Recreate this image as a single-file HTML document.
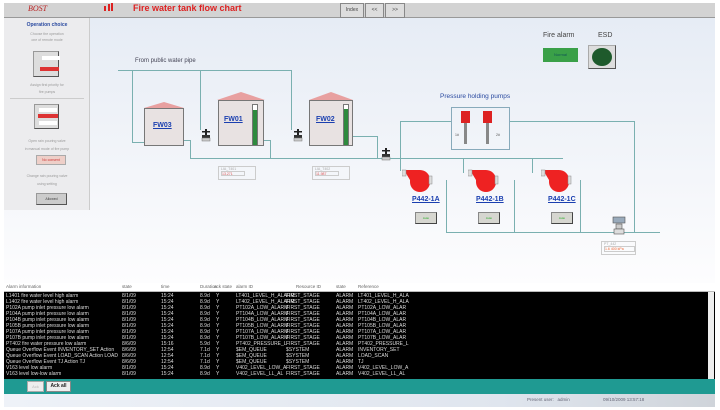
<!DOCTYPE html>
<html><head><meta charset="utf-8"><style>
*{margin:0;padding:0;box-sizing:border-box}
body{width:720px;height:410px;background:#fff;font-family:"Liberation Sans",sans-serif;position:relative;overflow:hidden}
.a{position:absolute}
.main{left:4px;top:18px;width:711px;height:265px;background:linear-gradient(#e6ecf5,#f4f6fa 60%,#fdfdfe)}
.t{font-size:3.5px;color:#999}
.row{position:absolute;left:6px;width:700px;height:6px;font-size:5px;line-height:6px;color:#ddd;white-space:nowrap}
.row span{position:absolute}
.tank{position:absolute;background:#e8e2e2;border:1px solid #777}
.roof{position:absolute;width:0;height:0;border-left:solid transparent;border-right:solid transparent;border-bottom:solid #e8a0a0}
.lbl{position:absolute;color:#1a3fb0;font-weight:bold;font-size:7px;text-decoration:underline}
.pipe{position:absolute;background:#7ab0b0}
.btn{position:absolute;background:#d6d6d0;border:1px solid #888;border-right-color:#444;border-bottom-color:#444;font-size:3px;color:#2a2;text-align:center;line-height:10px}
</style></head><body>
<div class="a" style="left:4px;top:3px;width:711px;height:15px;background:#d3d3d3;border-bottom:1px solid #999"></div>
<div class="a" style="left:28px;top:4px;font-family:'Liberation Serif',serif;font-style:italic;font-size:8px;color:#b22">BOST</div>
<div class="a" style="left:104px;top:6px;width:2px;height:5px;background:#d22"></div>
<div class="a" style="left:108px;top:4px;width:2px;height:7px;background:#d22"></div>
<div class="a" style="left:111px;top:3px;width:2px;height:8px;background:#d22"></div>
<div class="a" style="left:133px;top:3px;font-size:9px;font-weight:bold;color:#d22">Fire water tank flow chart</div>
<div class="a" style="left:340px;top:3px;width:24px;height:15px;border:1px solid #888;background:#ddd;font-size:5px;line-height:13px;text-align:center;color:#444">Index</div>
<div class="a" style="left:365px;top:3px;width:19px;height:15px;border:1px solid #888;background:#ddd;font-size:5px;line-height:13px;text-align:center;color:#444">&lt;&lt;</div>
<div class="a" style="left:385px;top:3px;width:20px;height:15px;border:1px solid #888;background:#ddd;font-size:5px;line-height:13px;text-align:center;color:#444">&gt;&gt;</div>
<div class="a main"></div>
<div class="a" style="left:4px;top:18px;width:86px;height:192px;background:#ececee;border-right:1px solid #ccc"></div>
<div class="a" style="left:4px;top:22px;width:86px;text-align:center;font-size:5px;font-weight:bold;color:#2a4aa0">Operation choice</div>
<div class="a t" style="left:4px;top:31px;width:86px;text-align:center;line-height:6px">Choose the operation<br>one of remote mode</div>
<div class="a" style="left:33px;top:51px;width:26px;height:26px;background:#ddd;border:1px solid #999;border-right-color:#555;border-bottom-color:#555"></div>
<div class="a" style="left:42px;top:56px;width:18px;height:4px;background:#fff"></div>
<div class="a" style="left:40px;top:67px;width:19px;height:4px;background:#d33"></div>
<div class="a t" style="left:4px;top:82px;width:86px;text-align:center;line-height:7px">Assign first priority for<br>fire pumps</div>
<div class="a" style="left:10px;top:98px;width:74px;height:1px;background:#ccc"></div>
<div class="a" style="left:34px;top:104px;width:25px;height:25px;background:#ddd;border:1px solid #999;border-right-color:#555;border-bottom-color:#555"></div>
<div class="a" style="left:39px;top:108px;width:18px;height:4px;background:#fff"></div>
<div class="a" style="left:38px;top:114px;width:20px;height:4px;background:#d33"></div>
<div class="a" style="left:39px;top:121px;width:18px;height:4px;background:#fff"></div>
<div class="a t" style="left:0px;top:137px;width:94px;text-align:center;line-height:8px">Open rain pouring valve<br>in manual mode of fire pump</div>
<div class="a" style="left:36px;top:155px;width:30px;height:10px;background:#eecfc8;border:1px solid #aaa;font-size:3.5px;color:#c33;text-align:center;line-height:8px">No consent</div>
<div class="a t" style="left:4px;top:172px;width:86px;text-align:center;line-height:8px">Change rain pouring valve<br>using setting</div>
<div class="a" style="left:36px;top:193px;width:31px;height:12px;background:#ccc;border:1px solid #999;border-right-color:#555;border-bottom-color:#555;font-size:3.5px;color:#444;text-align:center;line-height:10px">Allowed</div>

<div class="a" style="left:135px;top:58px;font-size:6px;color:#445">From public water pipe</div>
<div class="pipe" style="left:118px;top:70px;width:174px;height:1px"></div>
<div class="pipe" style="left:132px;top:70px;width:1px;height:72px"></div>
<div class="pipe" style="left:200px;top:70px;width:1px;height:60px"></div>
<div class="pipe" style="left:291px;top:70px;width:1px;height:60px"></div>
<div class="pipe" style="left:132px;top:142px;width:12px;height:1px"></div>
<div class="pipe" style="left:183px;top:140px;width:8px;height:1px"></div>
<div class="pipe" style="left:190px;top:140px;width:1px;height:18px"></div>
<div class="pipe" style="left:190px;top:158px;width:200px;height:1px"></div>
<div class="pipe" style="left:263px;top:140px;width:8px;height:1px"></div>
<div class="pipe" style="left:270px;top:140px;width:1px;height:18px"></div>
<div class="pipe" style="left:353px;top:136px;width:25px;height:1px"></div>
<div class="pipe" style="left:377px;top:136px;width:1px;height:22px"></div>

<div class="roof" style="left:144px;top:102px;border-left-width:20px;border-right-width:20px;border-bottom-width:6px"></div>
<div class="tank" style="left:144px;top:108px;width:40px;height:38px"></div>
<div class="lbl" style="left:153px;top:122px">FW03</div>
<div class="roof" style="left:217px;top:92px;border-left-width:24px;border-right-width:24px;border-bottom-width:8px"></div>
<div class="tank" style="left:218px;top:100px;width:46px;height:46px"></div>
<div class="a" style="left:252px;top:104px;width:6px;height:42px;background:#2e8a3e;border:1px solid #777"></div>
<div class="a" style="left:253px;top:105px;width:4px;height:5px;background:#fff"></div>
<div class="lbl" style="left:224px;top:116px">FW01</div>
<div class="roof" style="left:309px;top:92px;border-left-width:22px;border-right-width:22px;border-bottom-width:8px"></div>
<div class="tank" style="left:309px;top:100px;width:44px;height:46px"></div>
<div class="a" style="left:343px;top:104px;width:6px;height:42px;background:#2e8a3e;border:1px solid #777"></div>
<div class="a" style="left:344px;top:105px;width:4px;height:4px;background:#fff"></div>
<div class="lbl" style="left:316px;top:116px">FW02</div>

<svg class="a" style="left:200px;top:127px" width="12" height="16"><rect x="2" y="4" width="8" height="1.5" fill="#222"/><rect x="5" y="2" width="2" height="8" fill="#222"/><path d="M2 8h8v3H2z" fill="#333"/><rect x="2" y="11" width="8" height="3" fill="#ccc" stroke="#777" stroke-width=".5"/></svg>
<svg class="a" style="left:292px;top:127px" width="12" height="16"><rect x="2" y="4" width="8" height="1.5" fill="#222"/><rect x="5" y="2" width="2" height="8" fill="#222"/><path d="M2 8h8v3H2z" fill="#333"/><rect x="2" y="11" width="8" height="3" fill="#ccc" stroke="#777" stroke-width=".5"/></svg>
<svg class="a" style="left:380px;top:146px" width="12" height="16"><rect x="2" y="4" width="8" height="1.5" fill="#222"/><rect x="5" y="2" width="2" height="8" fill="#222"/><path d="M2 8h8v3H2z" fill="#333"/><rect x="2" y="11" width="8" height="3" fill="#ccc" stroke="#777" stroke-width=".5"/></svg>

<div class="a" style="left:218px;top:166px;width:38px;height:14px;border:1px solid #ccc;font-size:3.5px;color:#aaa;padding-left:2px">LIA_T401<div style="width:24px;height:5px;border:1px solid #ccc;color:#d55">13.271</div></div>
<div class="a" style="left:312px;top:166px;width:38px;height:14px;border:1px solid #ccc;font-size:3.5px;color:#aaa;padding-left:2px">LIA_T402<div style="width:24px;height:5px;border:1px solid #ccc;color:#d55">11.987</div></div>

<div class="a" style="left:543px;top:32px;font-size:7px;color:#444">Fire alarm</div>
<div class="a" style="left:598px;top:32px;font-size:7px;color:#444">ESD</div>
<div class="a" style="left:543px;top:48px;width:35px;height:14px;background:#3aa048;font-size:4px;color:#155;text-align:center;line-height:14px">Normal</div>
<div class="a" style="left:588px;top:45px;width:28px;height:24px;background:#ddd;border:1px solid #aaa;border-right-color:#555;border-bottom-color:#555"></div>
<div class="a" style="left:592px;top:48px;width:20px;height:18px;border-radius:50%;background:#1e5a2c"></div>

<div class="a" style="left:440px;top:93px;font-size:6.5px;color:#2a4aa0">Pressure holding pumps</div>
<div class="a" style="left:451px;top:107px;width:59px;height:43px;border:1px solid #8ab"></div>
<div class="a" style="left:461px;top:111px;width:9px;height:12px;background:#d22"></div>
<div class="a" style="left:464px;top:123px;width:3px;height:21px;background:#888"></div>
<div class="a" style="left:483px;top:111px;width:9px;height:12px;background:#d22"></div>
<div class="a" style="left:486px;top:123px;width:3px;height:21px;background:#888"></div>
<div class="a" style="left:455px;top:133px;font-size:3.5px;color:#555">1#</div>
<div class="a" style="left:496px;top:133px;font-size:3.5px;color:#555">2#</div>

<div class="pipe" style="left:400px;top:121px;width:51px;height:1px"></div>
<div class="pipe" style="left:510px;top:121px;width:125px;height:1px"></div>
<div class="pipe" style="left:400px;top:121px;width:1px;height:50px"></div>
<div class="pipe" style="left:634px;top:121px;width:1px;height:111px"></div>
<div class="pipe" style="left:390px;top:158px;width:173px;height:1px"></div>
<div class="pipe" style="left:463px;top:158px;width:1px;height:15px"></div>
<div class="pipe" style="left:532px;top:158px;width:1px;height:15px"></div>
<div class="pipe" style="left:446px;top:180px;width:1px;height:52px"></div>
<div class="pipe" style="left:514px;top:180px;width:1px;height:52px"></div>
<div class="pipe" style="left:580px;top:180px;width:1px;height:52px"></div>
<div class="pipe" style="left:446px;top:232px;width:214px;height:1px"></div>

<svg class="a" style="left:402px;top:168px" width="44" height="26"><path d="M2 2h16a10 10 0 1 1-10 10z" fill="#e22"/><circle cx="18" cy="14" r="10" fill="#e22"/><rect x="0" y="2" width="4" height="6" fill="#ddd" stroke="#888" stroke-width=".5"/><rect x="27" y="8" width="3" height="8" fill="#ddd" stroke="#888" stroke-width=".5"/></svg>
<svg class="a" style="left:468px;top:168px" width="44" height="26"><path d="M2 2h16a10 10 0 1 1-10 10z" fill="#e22"/><circle cx="18" cy="14" r="10" fill="#e22"/><rect x="0" y="2" width="4" height="6" fill="#ddd" stroke="#888" stroke-width=".5"/><rect x="27" y="8" width="3" height="8" fill="#ddd" stroke="#888" stroke-width=".5"/></svg>
<svg class="a" style="left:541px;top:168px" width="44" height="26"><path d="M2 2h16a10 10 0 1 1-10 10z" fill="#e22"/><circle cx="18" cy="14" r="10" fill="#e22"/><rect x="0" y="2" width="4" height="6" fill="#ddd" stroke="#888" stroke-width=".5"/><rect x="27" y="8" width="3" height="8" fill="#ddd" stroke="#888" stroke-width=".5"/></svg>
<div class="lbl" style="left:412px;top:196px">P442-1A</div>
<div class="lbl" style="left:476px;top:196px">P442-1B</div>
<div class="lbl" style="left:548px;top:196px">P442-1C</div>
<div class="btn" style="left:415px;top:212px;width:22px;height:12px">Auto</div>
<div class="btn" style="left:478px;top:212px;width:22px;height:12px">Auto</div>
<div class="btn" style="left:551px;top:212px;width:22px;height:12px">Auto</div>

<svg class="a" style="left:611px;top:216px" width="16" height="20"><rect x="2" y="1" width="12" height="6" fill="#9ab" stroke="#555" stroke-width=".6"/><rect x="5" y="8" width="6" height="5" fill="#ccc" stroke="#555" stroke-width=".6"/><rect x="3" y="13" width="10" height="5" fill="#ddd" stroke="#555" stroke-width=".6"/></svg>
<div class="a" style="left:601px;top:241px;width:35px;height:14px;border:1px solid #ccc;font-size:3.5px;color:#aaa;padding-left:2px">PT_442<div style="color:#e63;border:1px solid #ccc">1.6 400 kPa</div></div>

<div class="a" style="left:4px;top:283px;width:711px;height:96px;background:#000"></div>
<div class="a" style="left:4px;top:283px;width:711px;height:9px;background:#fff;border-bottom:1px solid #bbb"></div>
<div class="row" style="top:284px;color:#666;font-size:4.5px">
<span style="left:0">Alarm information</span><span style="left:116px">state</span><span style="left:155px">time</span><span style="left:194px">Duration</span><span style="left:208px">ack state</span><span style="left:230px">alarm ID</span><span style="left:290px">Resource ID</span><span style="left:330px">state</span><span style="left:352px">Reference</span></div>
<div class="a" style="left:708px;top:292px;width:6px;height:87px;background:#eee"></div>
<div id="rows"></div>
<div class="row" style="top:293px"><span style="left:0">L1401 fire water level high alarm</span><span style="left:116px">8/1/09</span><span style="left:155px">15:24</span><span style="left:194px">8.9d</span><span style="left:210px">Y</span><span style="left:230px">LT401_LEVEL_H_ALARM</span><span style="left:280px">FIRST_STAGE</span><span style="left:330px">ALARM</span><span style="left:352px">LT401_LEVEL_H_ALA</span></div>
<div class="row" style="top:299px"><span style="left:0">L1402 fire water level high alarm</span><span style="left:116px">8/1/09</span><span style="left:155px">15:24</span><span style="left:194px">8.9d</span><span style="left:210px">Y</span><span style="left:230px">LT402_LEVEL_H_ALARM</span><span style="left:280px">FIRST_STAGE</span><span style="left:330px">ALARM</span><span style="left:352px">LT402_LEVEL_H_ALA</span></div>
<div class="row" style="top:305px"><span style="left:0">P102A pump inlet pressure low alarm</span><span style="left:116px">8/1/09</span><span style="left:155px">15:24</span><span style="left:194px">8.9d</span><span style="left:210px">Y</span><span style="left:230px">PT102A_LOW_ALARM</span><span style="left:280px">FIRST_STAGE</span><span style="left:330px">ALARM</span><span style="left:352px">PT102A_LOW_ALAR</span></div>
<div class="row" style="top:311px"><span style="left:0">P104A pump inlet pressure low alarm</span><span style="left:116px">8/1/09</span><span style="left:155px">15:24</span><span style="left:194px">8.9d</span><span style="left:210px">Y</span><span style="left:230px">PT104A_LOW_ALARM</span><span style="left:280px">FIRST_STAGE</span><span style="left:330px">ALARM</span><span style="left:352px">PT104A_LOW_ALAR</span></div>
<div class="row" style="top:317px"><span style="left:0">P104B pump inlet pressure low alarm</span><span style="left:116px">8/1/09</span><span style="left:155px">15:24</span><span style="left:194px">8.9d</span><span style="left:210px">Y</span><span style="left:230px">PT104B_LOW_ALARM</span><span style="left:280px">FIRST_STAGE</span><span style="left:330px">ALARM</span><span style="left:352px">PT104B_LOW_ALAR</span></div>
<div class="row" style="top:323px"><span style="left:0">P105B pump inlet pressure low alarm</span><span style="left:116px">8/1/09</span><span style="left:155px">15:24</span><span style="left:194px">8.9d</span><span style="left:210px">Y</span><span style="left:230px">PT105B_LOW_ALARM</span><span style="left:280px">FIRST_STAGE</span><span style="left:330px">ALARM</span><span style="left:352px">PT105B_LOW_ALAR</span></div>
<div class="row" style="top:329px"><span style="left:0">P107A pump inlet pressure low alarm</span><span style="left:116px">8/1/09</span><span style="left:155px">15:24</span><span style="left:194px">8.9d</span><span style="left:210px">Y</span><span style="left:230px">PT107A_LOW_ALARM</span><span style="left:280px">FIRST_STAGE</span><span style="left:330px">ALARM</span><span style="left:352px">PT107A_LOW_ALAR</span></div>
<div class="row" style="top:335px"><span style="left:0">P107B pump inlet pressure low alarm</span><span style="left:116px">8/1/09</span><span style="left:155px">15:24</span><span style="left:194px">8.9d</span><span style="left:210px">Y</span><span style="left:230px">PT107B_LOW_ALARM</span><span style="left:280px">FIRST_STAGE</span><span style="left:330px">ALARM</span><span style="left:352px">PT107B_LOW_ALAR</span></div>
<div class="row" style="top:341px"><span style="left:0">PT402 fire water pressure low alarm</span><span style="left:116px">8/6/09</span><span style="left:155px">15:16</span><span style="left:194px">5.9d</span><span style="left:210px">Y</span><span style="left:230px">PT402_PRESSURE_L</span><span style="left:280px">FIRST_STAGE</span><span style="left:330px">ALARM</span><span style="left:352px">PT402_PRESSURE_L</span></div>
<div class="row" style="top:347px"><span style="left:0">Queue Overflow Event INVENTORY_SET Action</span><span style="left:116px">8/6/09</span><span style="left:155px">12:54</span><span style="left:194px">7.1d</span><span style="left:210px">Y</span><span style="left:230px">$EM_QUEUE</span><span style="left:280px">$SYSTEM</span><span style="left:330px">ALARM</span><span style="left:352px">INVENTORY_SET</span></div>
<div class="row" style="top:353px"><span style="left:0">Queue Overflow Event LOAD_SCAN Action LOAD</span><span style="left:116px">8/6/09</span><span style="left:155px">12:54</span><span style="left:194px">7.1d</span><span style="left:210px">Y</span><span style="left:230px">$EM_QUEUE</span><span style="left:280px">$SYSTEM</span><span style="left:330px">ALARM</span><span style="left:352px">LOAD_SCAN</span></div>
<div class="row" style="top:359px"><span style="left:0">Queue Overflow Event TJ Action TJ</span><span style="left:116px">8/6/09</span><span style="left:155px">12:54</span><span style="left:194px">7.1d</span><span style="left:210px">Y</span><span style="left:230px">$EM_QUEUE</span><span style="left:280px">$SYSTEM</span><span style="left:330px">ALARM</span><span style="left:352px">TJ</span></div>
<div class="row" style="top:365px"><span style="left:0">V163 level low alarm</span><span style="left:116px">8/1/09</span><span style="left:155px">15:24</span><span style="left:194px">8.9d</span><span style="left:210px">Y</span><span style="left:230px">V402_LEVEL_LOW_A</span><span style="left:280px">FIRST_STAGE</span><span style="left:330px">ALARM</span><span style="left:352px">V402_LEVEL_LOW_A</span></div>
<div class="row" style="top:371px"><span style="left:0">V163 level low-low alarm</span><span style="left:116px">8/1/09</span><span style="left:155px">15:24</span><span style="left:194px">8.9d</span><span style="left:210px">Y</span><span style="left:230px">V402_LEVEL_LL_AL</span><span style="left:280px">FIRST_STAGE</span><span style="left:330px">ALARM</span><span style="left:352px">V402_LEVEL_LL_AL</span></div>

<div class="a" style="left:4px;top:379px;width:711px;height:15px;background:#1f9a92"></div>
<div class="a" style="left:27px;top:381px;width:17px;height:11px;background:#eee;border:1px solid #aaa;font-size:4px;color:#bbb;text-align:center;line-height:9px">Ack</div>
<div class="a" style="left:46px;top:381px;width:25px;height:11px;background:#eee;border:1px solid #888;font-size:5px;font-weight:bold;color:#222;text-align:center;line-height:9px">Ack all</div>
<div class="a" style="left:4px;top:394px;width:711px;height:13px;background:linear-gradient(90deg,#eef2f8,#dfe5ee 70%,#cfd4da)"></div>
<div class="a" style="left:527px;top:397px;font-size:4.5px;color:#667">Present user:&nbsp;&nbsp;&nbsp;admin</div>
<div class="a" style="left:603px;top:397px;font-size:4.5px;color:#667">09/10/2009 13:57:18</div>
</body></html>
